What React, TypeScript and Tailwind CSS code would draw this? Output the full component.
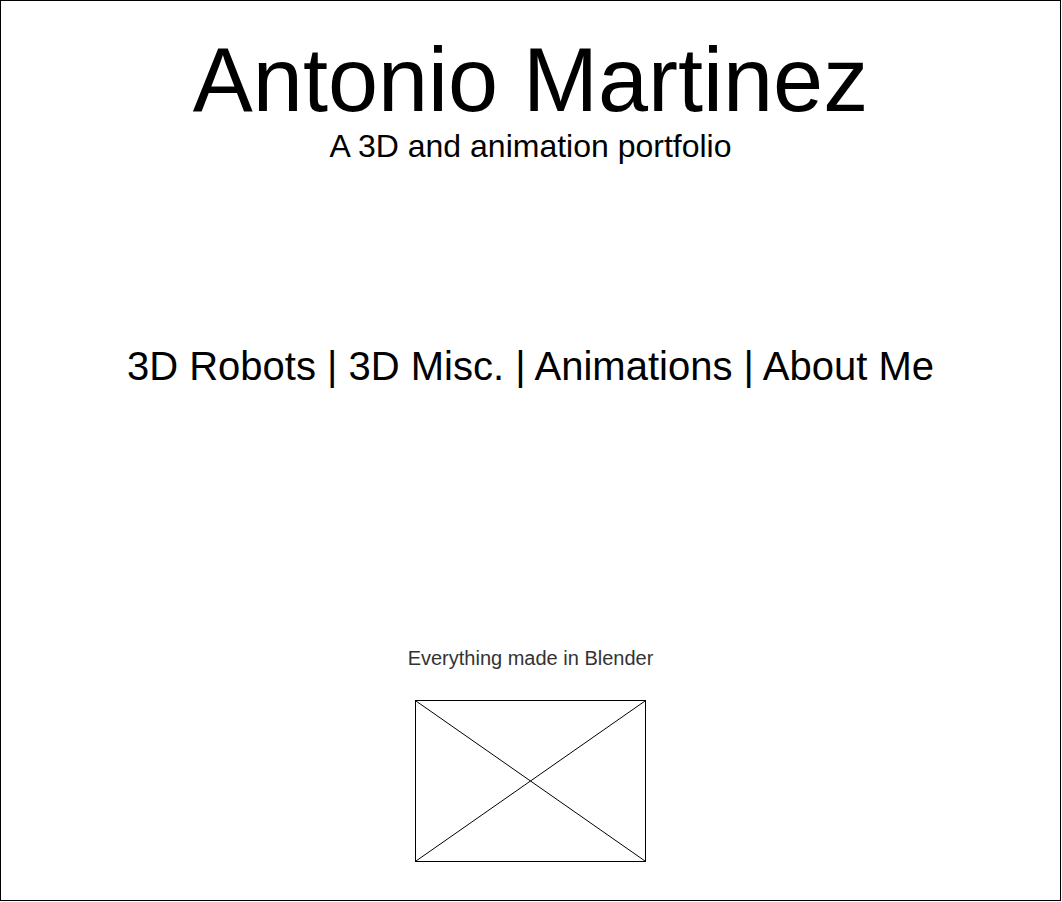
export default function App() {
  return (
    <div
      className="w-[1061px] h-[901px] border border-black bg-white flex flex-col items-center text-black"
      style={{ fontFamily: '"Liberation Sans", Arial, sans-serif' }}
    >
      <h1 className="mt-[35px] text-[90px] leading-[88px] font-normal whitespace-nowrap">Antonio Martinez</h1>
      <p className="mt-[6px] text-[32px] leading-[32px] whitespace-nowrap">A 3D and animation portfolio</p>
      <nav className="mt-[184px] text-[40px] leading-[40px] whitespace-nowrap">
        3D Robots | 3D Misc. | Animations | About Me
      </nav>
      <p className="mt-[262px] text-[20px] leading-[20px] text-[#333333] whitespace-nowrap">Everything made in Blender</p>
      <div className="mt-[32px] w-[231px] h-[162px] border border-black relative">
        <svg className="absolute inset-0 w-full h-full" viewBox="0 0 229 160" preserveAspectRatio="none">
          <line x1="0" y1="0" x2="229" y2="160" stroke="black" strokeWidth="1" />
          <line x1="229" y1="0" x2="0" y2="160" stroke="black" strokeWidth="1" />
        </svg>
      </div>
    </div>
  );
}
